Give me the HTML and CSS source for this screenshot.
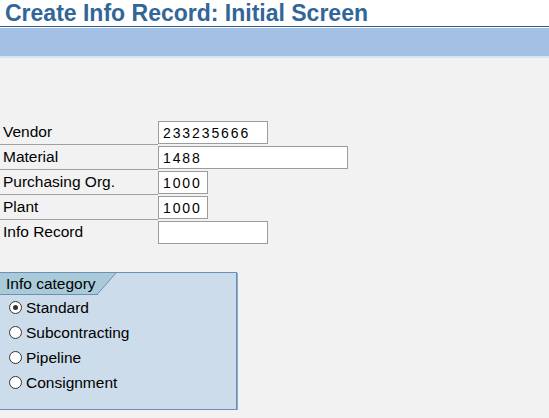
FILE: index.html
```html
<!DOCTYPE html>
<html lang="en">
<head>
    <meta charset="UTF-8">
    <meta name="viewport" content="width=device-width, initial-scale=1.0">
    <title>Create Info Record: Initial Screen</title>
    <link rel="stylesheet" href="styles.css">
</head>
<body>
    <h1 class="title">Create Info Record: Initial Screen</h1>
    <div class="toolbar"></div>

    <div class="content">
        <div class="fields">
            <div class="field">
                <label for="vendor">Vendor</label>
                <input type="text" id="vendor" class="w110" value="233235666">
            </div>
            <div class="field">
                <label for="material">Material</label>
                <input type="text" id="material" class="w190" value="1488">
            </div>
            <div class="field">
                <label for="porg">Purchasing Org.</label>
                <input type="text" id="porg" class="w50" value="1000">
            </div>
            <div class="field">
                <label for="plant">Plant</label>
                <input type="text" id="plant" class="w50" value="1000">
            </div>
            <div class="field last">
                <label for="inforec">Info Record</label>
                <input type="text" id="inforec" class="w110" value="">
            </div>
        </div>

        <div class="group">
            <div class="tab">
                <span class="tab-label">Info category</span>
                <svg class="tab-slant" width="20" height="22" viewBox="0 0 20 22">
                    <polygon points="0,0 19,0 0,21" fill="#a9cbd9"/>
                    <line x1="19" y1="0" x2="0" y2="21.5" stroke="#6a8fb8" stroke-width="1"/>
                    <line x1="0" y1="21.5" x2="1" y2="21.5" stroke="#6a8fb8" stroke-width="1"/>
                </svg>
            </div>
            <div class="radio"><span class="dot checked"></span>Standard</div>
            <div class="radio"><span class="dot"></span>Subcontracting</div>
            <div class="radio"><span class="dot"></span>Pipeline</div>
            <div class="radio"><span class="dot"></span>Consignment</div>
        </div>
    </div>
</body>
</html>
```

FILE: styles.css
```css
body {
    margin: 0;
    background: #f2f2f2;
    color: #000;
    font-family: 'Liberation Sans', Arial, sans-serif;
    font-size: 15.5px;
}
.title {
    margin: 0;
    height: 26px;
    line-height: 26px;
    padding-left: 5px;
    background: #fff;
    color: #316698;
    font-size: 23px;
    font-weight: bold;
    border-bottom: 1px solid #2c5f94;
    white-space: nowrap;
}
.toolbar {
    height: 28px;
    background: #a4c0e3;
    border-top: 1px solid #fff;
    border-bottom: 2px solid #d6e4f4;
}
.content {
    padding-top: 62px;
}
.field {
    display: flex;
    height: 25px;
}
.field label {
    width: 158px;
    box-sizing: border-box;
    height: 25px;
    padding-left: 3px;
    line-height: 24px;
    border-bottom: 1px solid #a0a0a0;
}
.field.last label {
    border-bottom: none;
}
.field input {
    margin: 1px 0 0 0;
    height: 23px;
    box-sizing: border-box;
    border: 1px solid #9c9c9c;
    background: #fff;
    padding: 0 0 0 4px;
    font-family: 'Liberation Sans', Arial, sans-serif;
    font-size: 14px;
    letter-spacing: 1.9px;
    color: #000;
    outline: none;
}
.w50 { width: 50px; }
.w110 { width: 110px; }
.w190 { width: 190px; }

.group {
    margin-top: 27px;
    width: 237px;
    height: 138px;
    box-sizing: border-box;
    background: #cddcea;
    border: 1px solid #6a8fb8;
    border-left: none;
    box-shadow: 1px 1px 0 #8eabc9;
}
.tab {
    display: flex;
    height: 22px;
}
.tab-label {
    width: 97px;
    box-sizing: border-box;
    padding-left: 6px;
    line-height: 21px;
    background: #a9cbd9;
    border-bottom: 1px solid #6a8fb8;
    white-space: nowrap;
    position: relative;
    z-index: 1;
}
.tab-slant {
    display: block;
}
.radio {
    display: flex;
    align-items: center;
    height: 25px;
    padding-left: 9px;
}
.dot {
    width: 13px;
    height: 13px;
    box-sizing: border-box;
    border: 1px solid #333;
    border-radius: 50%;
    background: #fff;
    margin-right: 4px;
    display: flex;
    align-items: center;
    justify-content: center;
}
.dot.checked::after {
    content: "";
    width: 5px;
    height: 5px;
    border-radius: 50%;
    background: #333;
}
```
